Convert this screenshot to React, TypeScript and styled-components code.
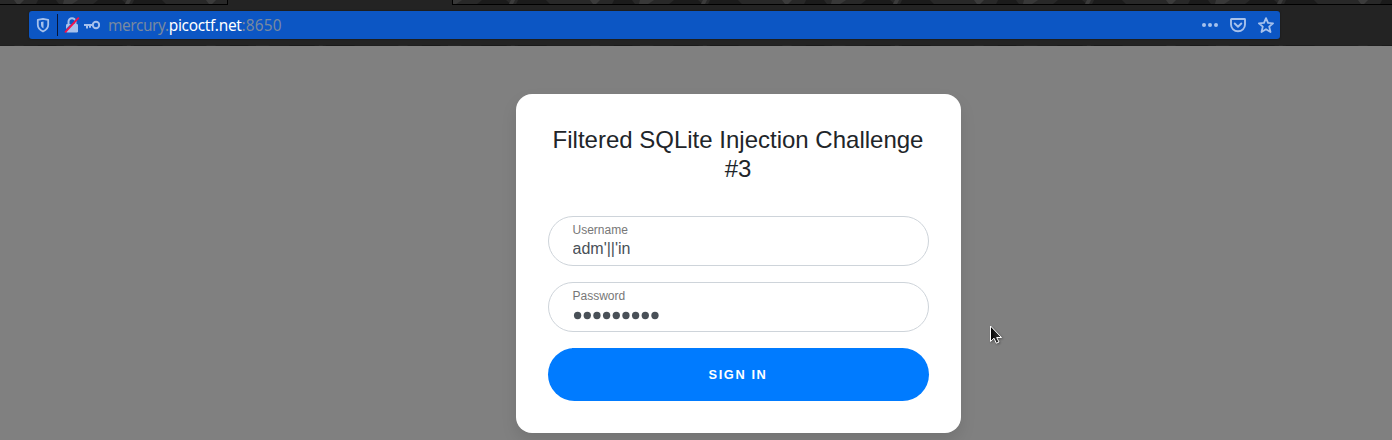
import React from 'react';
import styled, { createGlobalStyle } from 'styled-components';

const Global = createGlobalStyle`
  * { box-sizing: border-box; }
  body { margin: 0; background: #808080; font-family: "Liberation Sans", Arial, sans-serif; overflow: hidden; }
`;

const Page = styled.div`
  position: relative;
  height: 440px;
  overflow: hidden;
  background: #808080;
`;

const TabStrip = styled.div`
  display: flex;
  height: 5px;
  background: #232323;
`;

const TabGap = styled.div<{ $width?: number }>`
  height: 5px;
  ${(p) => (p.$width ? `width: ${p.$width}px; border-right: 1px solid #000;` : 'flex: 1; border-left: 1px solid #000;')}
  border-bottom: 1px solid #000;
  overflow: hidden;
  svg { display: block; }
`;

const ActiveTab = styled.div`
  width: 224px;
`;

const Toolbar = styled.div`
  height: 41px;
  padding: 6px 0 0 29px;
  background: #232323;
`;

const AddressBar = styled.div`
  display: flex;
  align-items: center;
  width: 1251px;
  height: 28px;
  padding: 0 6px;
  border-radius: 3px;
  background: #0c56c4;
  box-shadow: 0 0 2px rgba(0, 0, 0, 0.5);
  color: #a6c1ec;
  svg { display: block; flex: none; }
`;

const Divider = styled.div`
  width: 1px;
  height: 22px;
  margin: 0 6px;
  background: #07163a;
`;

const SiteIcons = styled.div`
  display: flex;
  gap: 4px;
`;

const Url = styled.div`
  flex: 1;
  margin-left: 8px;
  padding-top: 2px;
  font: 15.4px/28px "Noto Sans", sans-serif;
  letter-spacing: -0.38px;
  color: #78899f;
`;

const Domain = styled.span`
  letter-spacing: -0.28px;
  color: #fff;
`;

const Port = styled.span`
  letter-spacing: 0.15px;
`;

const Actions = styled.div`
  display: flex;
  gap: 12px;
`;

const EdgeStrip = styled.div`
  height: 1px;
  margin: 6px 0 0 -29px;
  overflow: hidden;
  opacity: 0.5;
  background: #000;
  svg { display: block; opacity: 0.7; }
`;

const Card = styled.main`
  width: 445px;
  height: 339px;
  margin: 48px 0 0 516px;
  padding: 32px;
  border-radius: 16px;
  background: #fff;
  box-shadow: 0 8px 16px rgba(0, 0, 0, 0.1);
`;

const Title = styled.h5`
  margin: 0 1px 32.4px 0;
  font-size: 24px;
  font-weight: 400;
  line-height: 28.8px;
  text-align: center;
  color: #212529;
`;

const Field = styled.label`
  display: block;
  height: 50px;
  margin-bottom: 16px;
  padding: 6px 24px 0 23.5px;
  border: 1px solid #ced4da;
  border-radius: 25px;
`;

const FieldLabel = styled.span`
  display: block;
  font-size: 12px;
  line-height: 15px;
  color: #777;
`;

const Input = styled.input`
  display: block;
  width: 100%;
  height: 22px;
  padding: 0;
  border: 0;
  outline: 0;
  background: transparent;
  font: 16px/22px "Liberation Sans", Arial, sans-serif;
  color: #495057;
`;

const MaskedValue = styled.svg`
  display: block;
  fill: #495057;
`;

const SignIn = styled.button`
  display: block;
  width: 100%;
  height: 53px;
  padding: 0 1px 0 0;
  border: 0;
  border-radius: 27px;
  background: #007bff;
  color: #fff;
  font: 700 12.8px/19px "Liberation Sans", Arial, sans-serif;
  letter-spacing: 1.6px;
  text-transform: uppercase;
`;

const Cursor = styled.svg`
  position: absolute;
  left: 988px;
  top: 324px;
  filter: drop-shadow(1px 1px 1px rgba(0, 0, 0, 0.35));
`;

const ThemePattern = ({ id, offset = 0 }: { id: string; offset?: number }) => (
  <svg width="1392" height="4">
    <defs>
      <pattern id={id} width="192" height="4" patternUnits="userSpaceOnUse" x={offset}>
        <rect width="192" height="4" fill="#282828" />
        <path d="M14 0h10l-4 4h-3z" fill="#3b3b3b" />
        <path d="M38 0h18l3 4H36z" fill="#1b1b1b" />
        <path d="M64 0h14l-6 4h-9z" fill="#383838" />
        <path d="M98 0h24l5 4H93z" fill="#1b1b1b" />
        <path d="M127 0h4l-2 4h-4z" fill="#3b3b3b" />
        <path d="M134 0h28l4 4h-34z" fill="#1b1b1b" />
      </pattern>
    </defs>
    <rect width="1392" height="4" fill={`url(#${id})`} />
  </svg>
);

const ShieldIcon = () => (
  <svg width="16" height="16" viewBox="0 0 16 16">
    <path d="M8 1.900 13.200 2.800v5c0 3.300-2.300 5.400-5.200 6.700-2.900-1.300-5.200-3.400-5.200-6.700v-5z" fill="none" stroke="currentColor" strokeWidth="1.800" strokeLinejoin="round" />
    <path d="M8.500 4.600v7C6.900 10.700 6 9.400 6 7.800V5z" fill="currentColor" />
  </svg>
);

const InsecureLockIcon = () => (
  <svg width="16" height="16" viewBox="0 0 16 16">
    <path d="M4.500 8V4.800a3.500 3.500 0 0 1 7 0V8" fill="none" stroke="currentColor" strokeWidth="2" />
    <rect x="2" y="7" width="12" height="8.500" rx="1.200" fill="currentColor" />
    <path d="M1 14 14.300.700" stroke="#0c56c4" strokeWidth="1.400" />
    <path d="M1.500 14.800 14.300 1.200" stroke="#f5104a" strokeWidth="1.900" strokeLinecap="round" />
  </svg>
);

const KeyIcon = () => (
  <svg width="16" height="16" viewBox="0 0 16 16">
    <circle cx="12" cy="8" r="3.200" fill="none" stroke="currentColor" strokeWidth="2" />
    <path d="M0 8h9M3 8v3.500M6 8v2.700" fill="none" stroke="currentColor" strokeWidth="2" />
  </svg>
);

const DotsIcon = () => (
  <svg width="16" height="16" viewBox="0 0 16 16" fill="currentColor">
    <circle cx="2" cy="8" r="2" />
    <circle cx="8" cy="8" r="2" />
    <circle cx="14" cy="8" r="2" />
  </svg>
);

const PocketIcon = () => (
  <svg width="16" height="16" viewBox="0 0 16 16" fill="none" stroke="currentColor" strokeWidth="1.900" strokeLinejoin="round">
    <path d="M1.500 2h13a.5.5 0 0 1 .5.5v5a7 6.800 0 0 1-14 0v-5a.5.5 0 0 1 .5-.5z" />
    <path d="m4.700 6.500 3.300 3.200 3.300-3.200" strokeLinecap="round" />
  </svg>
);

const StarIcon = () => (
  <svg width="16" height="16" viewBox="0 0 16 16">
    <path d="m8 1.200 2 4.700 5.100.4-3.900 3.300 1.300 5.400L8 12.200 3.500 15l1.300-5.400L.9 6.300 6 5.900z" fill="none" stroke="currentColor" strokeWidth="1.800" strokeLinejoin="round" />
  </svg>
);

export default function App() {
  return (
    <Page>
      <Global />
      <TabStrip>
        <TabGap $width={228}><ThemePattern id="tabs-left" /></TabGap>
        <ActiveTab />
        <TabGap><ThemePattern id="tabs-right" offset={-69} /></TabGap>
      </TabStrip>
      <Toolbar>
        <AddressBar>
          <ShieldIcon />
          <Divider />
          <SiteIcons>
            <InsecureLockIcon />
            <KeyIcon />
          </SiteIcons>
          <Url>mercury.<Domain>picoctf.net</Domain><Port>:8650</Port></Url>
          <Actions>
            <DotsIcon />
            <PocketIcon />
            <StarIcon />
          </Actions>
        </AddressBar>
        <EdgeStrip><ThemePattern id="edge" /></EdgeStrip>
      </Toolbar>
      <Card>
        <Title>Filtered SQLite Injection Challenge #3</Title>
        <Field>
          <FieldLabel>Username</FieldLabel>
          <Input defaultValue="adm'||'in" />
        </Field>
        <Field>
          <FieldLabel>Password</FieldLabel>
          <MaskedValue width="90" height="20">
            {Array.from({ length: 9 }, (_, i) => (
              <circle key={i} cx={4.6 + i * 9.67} cy="11.5" r="3.65" />
            ))}
          </MaskedValue>
        </Field>
        <SignIn>Sign in</SignIn>
      </Card>
      <Cursor width="16" height="22" viewBox="0 0 16 22">
        <defs>
          <linearGradient id="pointer" x1="0" y1="0" x2="1" y2="0">
            <stop offset="0" stopColor="#000" />
            <stop offset="1" stopColor="#444" />
          </linearGradient>
        </defs>
        <path d="M2.500 2v15.500l3.500-3.300 2.300 5 2.700-1.200-2.300-4.500h4.800z" fill="url(#pointer)" stroke="#fff" strokeWidth="1" />
      </Cursor>
    </Page>
  );
}
